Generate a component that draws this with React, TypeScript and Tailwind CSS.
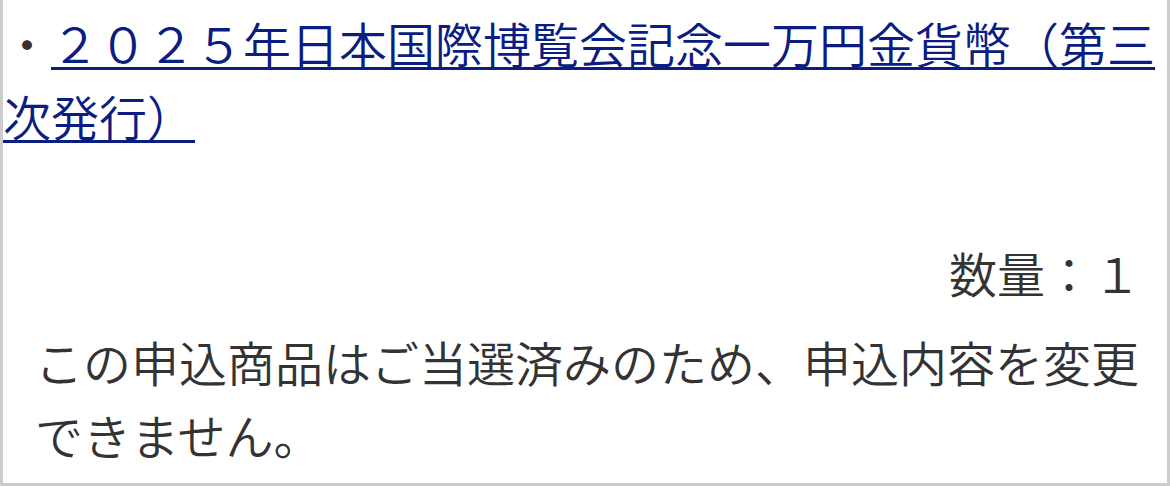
export default function App() {
  return (
    <div
      className="w-[1170px] h-[487px] bg-white"
      style={{ fontFamily: '"Noto Sans CJK JP", "Noto Sans", sans-serif' }}
    >
      <div className="h-[486px] border-x-[3px] border-b-[3px] border-[#cccccc] bg-white pt-[6px] text-[48px] font-[350] leading-[73px] text-[#333333]">
        {/* 商品名 */}
        <p>
          ・
          <a href="#" className="text-[#0b1c82] underline decoration-[3px] underline-offset-[4px]">
            ２０２５年日本国際博覧会記念一万円金貨幣（第三次発行）
          </a>
        </p>

        {/* 数量 */}
        <p className="mt-[84px] pr-[26px] text-right">数量：１</p>

        {/* 注意書き */}
        <p className="mt-[16px] pl-[32px] pr-[20px]">
          この申込商品はご当選済みのため、申込内容を変更できません。
        </p>
      </div>
    </div>
  );
}
